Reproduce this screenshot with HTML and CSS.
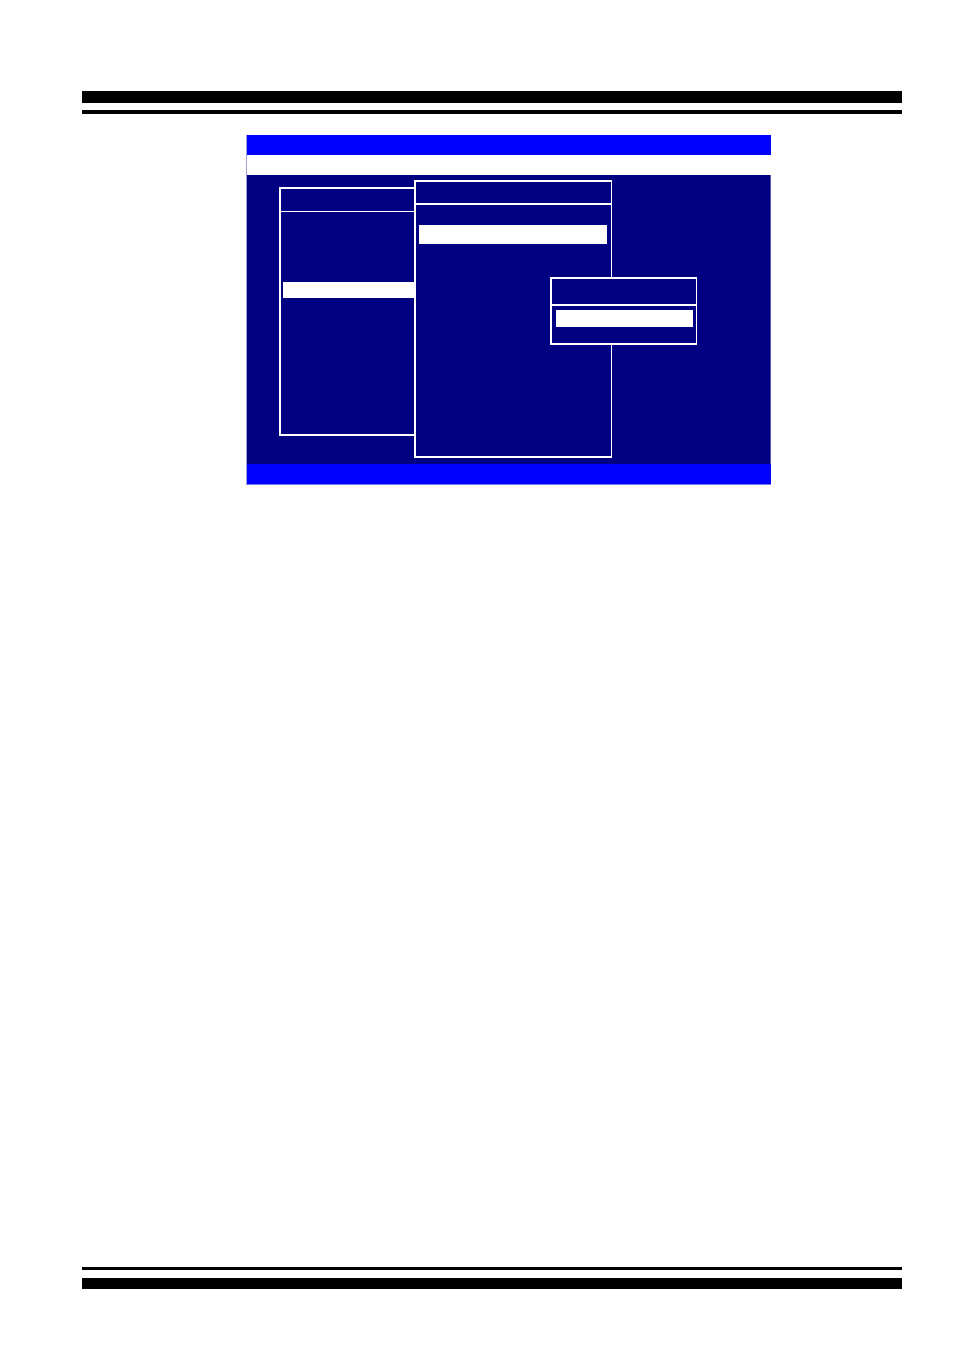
FILE: index.html
```html
<!DOCTYPE html>
<html>
<head>
<meta charset="utf-8">
<title>Setup Screen</title>
<link rel="stylesheet" href="styles.css">
</head>
<body>
<div class="page">
  <div class="rules rules-top">
    <div class="bar bar-thick"></div>
    <div class="bar bar-thin"></div>
  </div>

  <div class="screen">
    <div class="title-bar"></div>
    <div class="menu-bar"></div>
    <div class="desk">
      <div class="win win-left">
        <div class="win-head head-left"></div>
        <div class="win-body body-left">
          <div class="hl hl-left"></div>
        </div>
      </div>
      <div class="win win-mid">
        <div class="win-head head-mid"></div>
        <div class="win-body body-mid">
          <div class="hl hl-mid"></div>
        </div>
      </div>
      <div class="win win-pop">
        <div class="win-head head-pop"></div>
        <div class="win-body body-pop">
          <div class="hl hl-pop"></div>
        </div>
      </div>
    </div>
    <div class="status-bar"></div>
  </div>

  <div class="rules rules-bottom">
    <div class="bar bar-thin2"></div>
    <div class="bar bar-thick2"></div>
  </div>
</div>
</body>
</html>
```

FILE: styles.css
```css
* { box-sizing: border-box; }

html, body {
  margin: 0;
  padding: 0;
  background: #ffffff;
  font-family: "Liberation Sans", Arial, sans-serif;
}

.page {
  width: 954px;
  height: 1354px;
  padding-top: 91px;
}

.rules {
  margin-left: 82px;
  width: 820px;
  display: flex;
  flex-direction: column;
}

.bar { background: #000000; }

.rules-top { gap: 7px; }
.bar-thick { height: 12px; }
.bar-thin { height: 4px; }

.rules-bottom {
  margin-top: 782px;
  gap: 8px;
}
.bar-thin2 { height: 3px; }
.bar-thick2 { height: 11px; }

.screen {
  margin-top: 21px;
  margin-left: 246px;
  width: 525px;
  border-left: 1px solid #a0a0d8;
}

.title-bar {
  height: 20px;
  background: #0000ff;
}

.menu-bar {
  height: 20px;
  background: #ffffff;
}

.desk {
  position: relative;
  height: 289px;
  background: #000080;
  border-right: 1px solid #5a5ab0;
}

.status-bar {
  height: 21px;
  background: #0000ff;
  border-bottom: 1px solid #7a7ae8;
}

.win {
  position: absolute;
  background: #000080;
  border: 2px solid #ffffff;
  border-right-width: 1px;
  display: flex;
  flex-direction: column;
}

.win-head { flex: none; }
.win-body { flex: 1; }

.hl { background: #ffffff; }

/* left window (partly hidden) */
.win-left {
  left: 32px;
  top: 12px;
  width: 150px;
  height: 249px;
}
.head-left {
  height: 23px;
  border-bottom: 1px solid #ffffff;
}
.body-left { padding: 70px 0 0 2px; }
.hl-left { height: 16px; width: 140px; }

/* middle window */
.win-mid {
  left: 167px;
  top: 5px;
  width: 198px;
  height: 278px;
}
.head-mid {
  height: 23px;
  border-bottom: 2px solid #ffffff;
}
.body-mid { padding: 20px 4px 0 3px; }
.hl-mid { height: 19px; }

/* popup window */
.win-pop {
  left: 303px;
  top: 102px;
  width: 147px;
  height: 68px;
}
.head-pop {
  height: 27px;
  border-bottom: 2px solid #ffffff;
}
.body-pop { padding: 4px 3px 0 4px; }
.hl-pop { height: 17px; }
```
